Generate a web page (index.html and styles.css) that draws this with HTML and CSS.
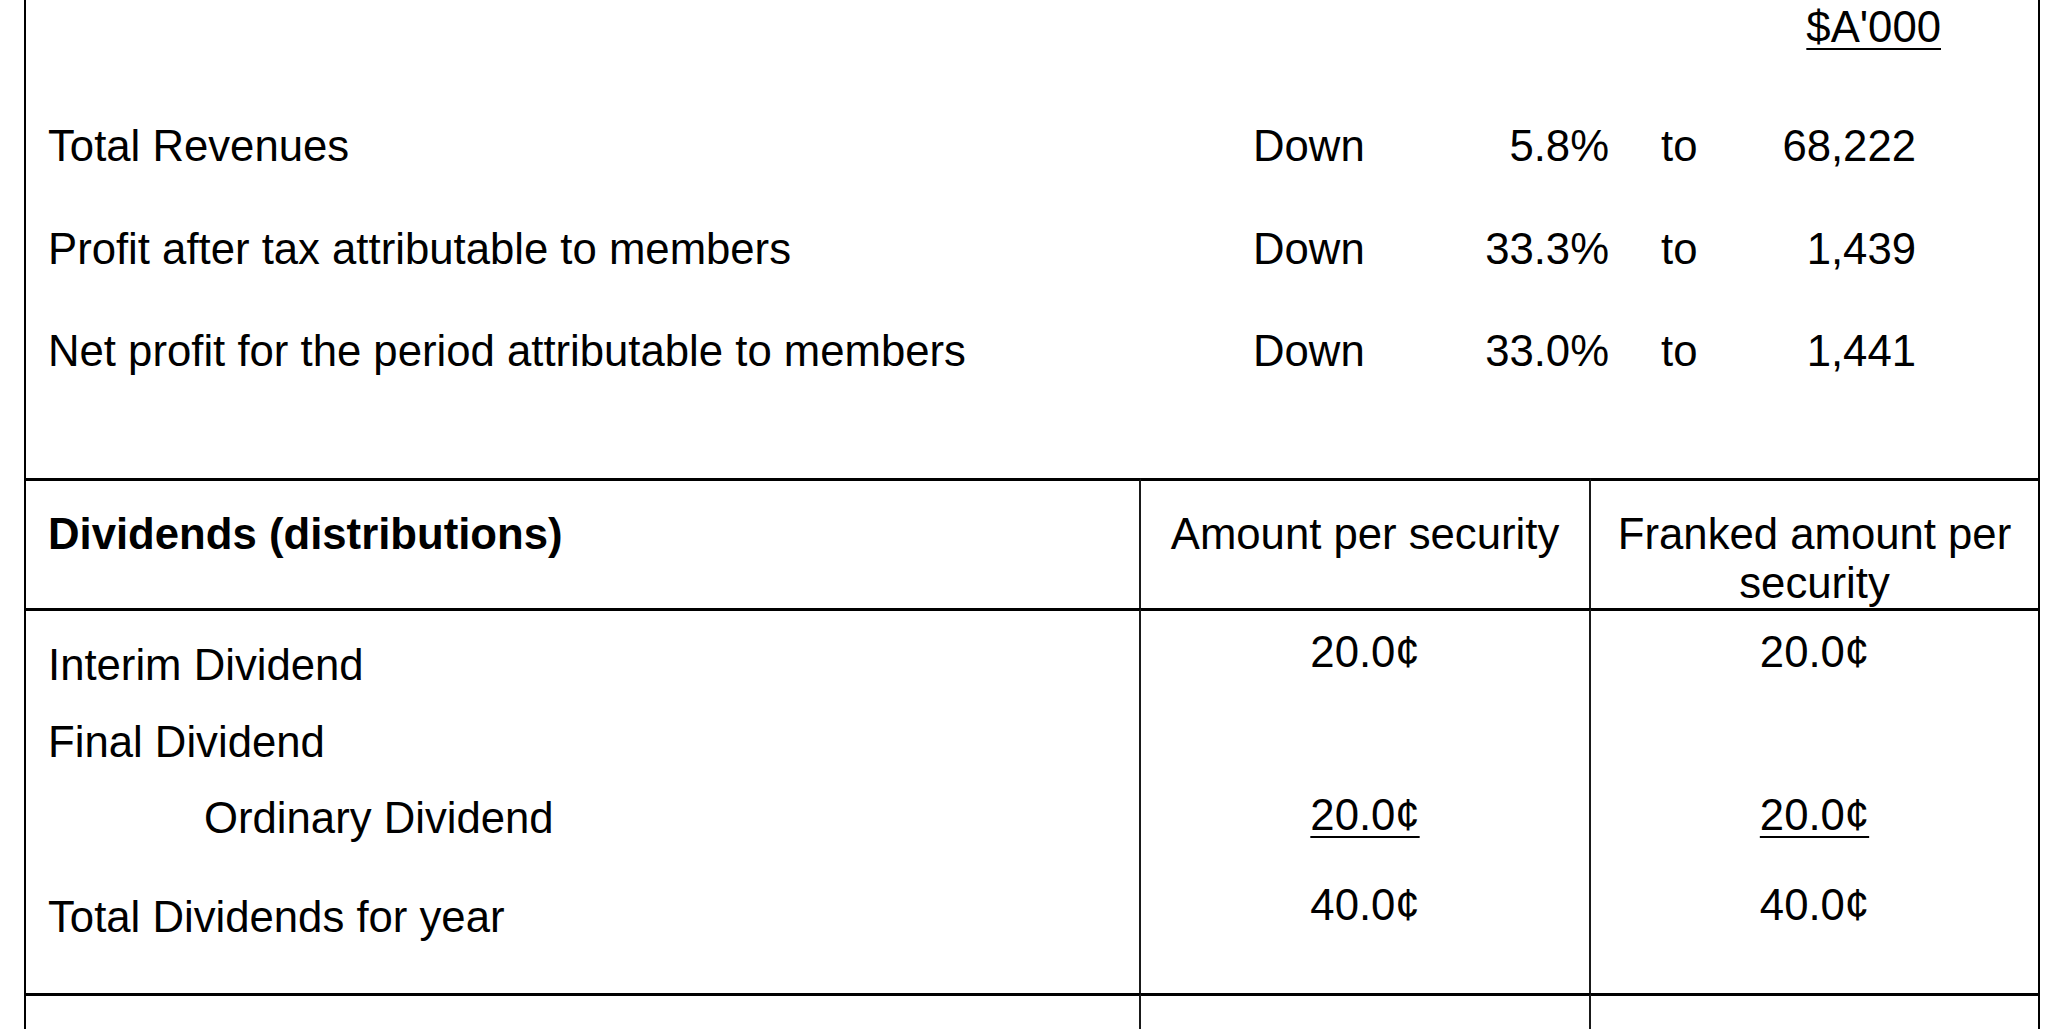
FILE: index.html
```html
<!DOCTYPE html>
<html lang="en">
<head>
<meta charset="utf-8">
<title>Results for announcement to the market</title>
<link rel="stylesheet" href="styles.css">
</head>
<body>
<div class="page">
  <section class="summary">
    <div class="unit"><span class="ul">$A'000</span></div>
    <div class="results">
      <div class="label">Total Revenues</div>
      <div class="dir">Down</div>
      <div class="pct">5.8%</div>
      <div class="to">to</div>
      <div class="num">68,222</div>

      <div class="label">Profit after tax attributable to members</div>
      <div class="dir">Down</div>
      <div class="pct">33.3%</div>
      <div class="to">to</div>
      <div class="num">1,439</div>

      <div class="label">Net profit for the period attributable to members</div>
      <div class="dir">Down</div>
      <div class="pct">33.0%</div>
      <div class="to">to</div>
      <div class="num">1,441</div>
    </div>
  </section>

  <section class="dividends">
    <div class="cell head first"><p class="bold">Dividends (distributions)</p></div>
    <div class="cell head mid"><p class="center">Amount per security</p></div>
    <div class="cell head last"><p class="center">Franked amount per<br>security</p></div>

    <div class="cell body first">
      <p class="l-interim">Interim Dividend</p>
      <p class="l-final">Final Dividend</p>
      <p class="l-ordinary">Ordinary Dividend</p>
      <p class="l-total">Total Dividends for year</p>
    </div>
    <div class="cell body mid">
      <p class="v-interim">20.0¢</p>
      <p class="v-ordinary"><span class="ul">20.0¢</span></p>
      <p class="v-total">40.0¢</p>
    </div>
    <div class="cell body last">
      <p class="v-interim">20.0¢</p>
      <p class="v-ordinary"><span class="ul">20.0¢</span></p>
      <p class="v-total">40.0¢</p>
    </div>

    <div class="cell foot first"></div>
    <div class="cell foot mid"></div>
    <div class="cell foot last"></div>
  </section>
</div>
</body>
</html>
```

FILE: styles.css
```css
html, body {
  margin: 0;
  padding: 0;
  background: #fff;
}

body {
  font-family: "Liberation Sans", Arial, Helvetica, sans-serif;
  font-size: 43.7px;
  line-height: 49px;
  color: #000;
}

p {
  margin: 0;
}

.page {
  margin-left: 24px;
  width: 2012px;
  border-left: 2px solid #000;
  border-right: 2px solid #000;
}

.ul {
  text-decoration: underline;
  text-decoration-thickness: 2px;
  text-underline-offset: 6px;
}

/* top summary block */
.summary {
  height: 478px;
  padding-left: 22px;
  box-sizing: border-box;
}

.unit {
  text-align: right;
  padding-right: 97px;
  padding-top: 4px;
  line-height: 46px;
  height: 46px;
}

.results {
  margin-top: 71px;
  display: grid;
  grid-template-columns: 1205px 200px 156px 131px 176px;
  row-gap: 53.5px;
}

.dir { text-align: left; }
.pct { text-align: right; }
.to { text-align: left; padding-left: 52px; }
.num { text-align: right; }

/* dividends table */
.dividends {
  display: grid;
  grid-template-columns: 1115px 450px 447px;
  grid-template-rows: 130px 385px 36px;
}

.cell {
  border-top: 3px solid #000;
  box-sizing: border-box;
}

.cell.first,
.cell.mid {
  border-right: 2px solid #1a1a1a;
}

.head {
  padding-top: 28px;
}

.first {
  padding-left: 22px;
}

.bold {
  font-weight: bold;
}

.center {
  text-align: center;
}

.mid p,
.last p {
  text-align: center;
}

.l-interim { margin-top: 29px; }
.l-final { margin-top: 28px; }
.l-ordinary { margin-top: 27px; padding-left: 156px; }
.l-total { margin-top: 50px; }

.v-interim { margin-top: 16px; }
.v-ordinary { margin-top: 114px; }
.v-total { margin-top: 41px; }
```
